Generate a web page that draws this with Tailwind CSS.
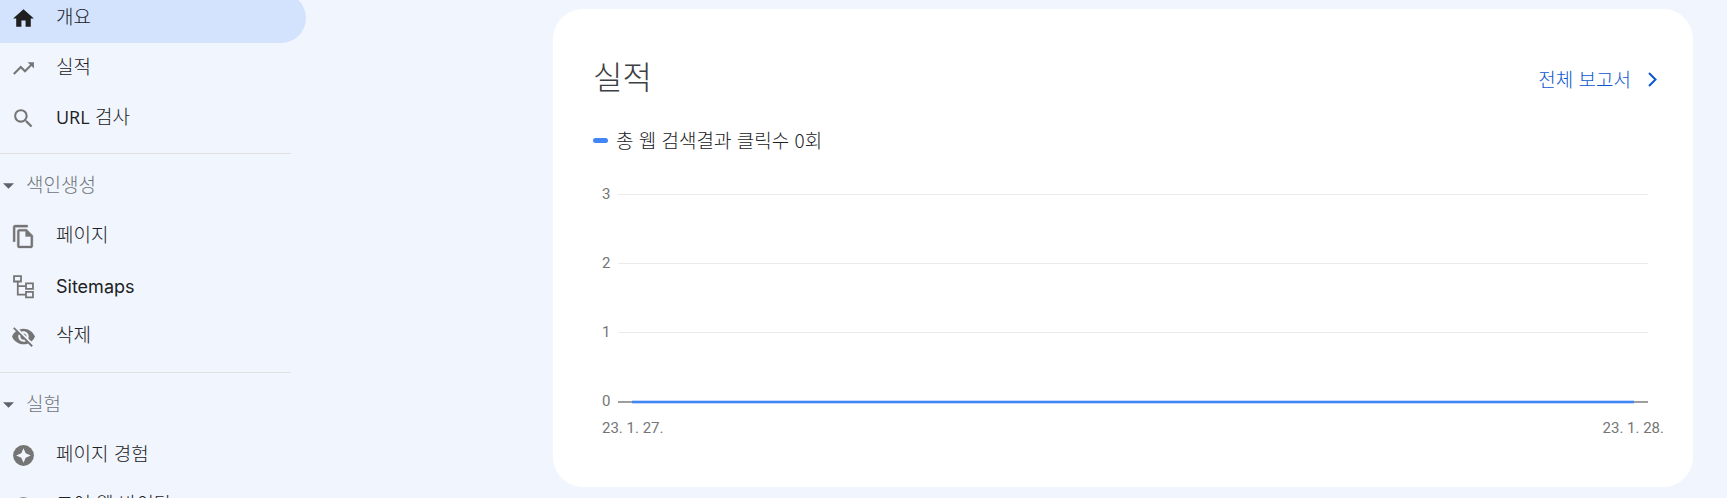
<!DOCTYPE html>
<html lang="ko">
<head>
  <meta charset="UTF-8" />
  <meta name="viewport" content="width=device-width, initial-scale=1.0" />
  <title>개요</title>
  <script src="https://cdn.jsdelivr.net/npm/@tailwindcss/browser@4"></script>
</head>
<body class="bg-[#f1f5fd] text-[#202124] font-['Noto_Sans_CJK_KR',sans-serif]">
  <div class="flex h-screen overflow-hidden">

    <!-- Menú lateral -->
    <nav class="w-[306px] shrink-0 -mt-[7px] text-[19px] font-light">
      <ul class="pb-[10px]">
        <li>
          <a href="#" aria-current="page" class="flex h-[50px] items-center gap-5 rounded-r-full bg-[#d3e3fd] pl-[11px]">
            <svg class="size-[25px]" viewBox="0 0 24 24" fill="#1f1f1f"><path d="M10 20v-6h4v6h5v-8h3L12 3 2 12h3v8z"/></svg>
            <span class="pb-1">개요</span>
          </a>
        </li>
        <li>
          <a href="#" class="flex h-[50px] items-center gap-5 pl-[11px]">
            <svg class="size-[25px]" viewBox="0 0 24 24" fill="#757575"><path d="M16 6l2.29 2.29-4.88 4.88-4-4L2 16.59 3.41 18l6-6 4 4 6.3-6.29L22 12V6z"/></svg>
            <span class="pb-1">실적</span>
          </a>
        </li>
        <li>
          <a href="#" class="flex h-[50px] items-center gap-5 pl-[11px]">
            <svg class="size-[25px]" viewBox="0 0 24 24" fill="#757575"><path d="M15.5 14h-.79l-.28-.27A6.471 6.471 0 0 0 16 9.5 6.5 6.5 0 1 0 9.5 16c1.61 0 3.09-.59 4.23-1.57l.27.28v.79l5 4.99L20.49 19l-4.99-5zm-6 0C7.01 14 5 11.99 5 9.5S7.01 5 9.5 5 14 7.01 14 9.5 11.99 14 9.5 14z"/></svg>
            <span class="pb-1"><span class="font-['Open_Sans'] text-[18px] font-medium">URL</span> 검사</span>
          </a>
        </li>
      </ul>

      <div class="mr-[15px] border-t border-[#e0e0e0] pt-[7px]">
        <button type="button" class="flex h-[50px] w-full items-center gap-3 pl-[3px] text-[#6f7479]">
          <svg class="w-[11px] h-[6px]" viewBox="0 0 10 5" fill="#5f6368"><path d="M0 0h10L5 5z"/></svg>
          <span class="pb-1">색인생성</span>
        </button>
      </div>
      <ul class="pb-[11px]">
        <li>
          <a href="#" class="flex h-[50px] items-center gap-5 pl-[11px]">
            <svg class="size-[25px]" viewBox="0 0 24 24" fill="#757575" stroke="#757575" stroke-width="0.3"><path d="M16 1H4c-1.1 0-2 .9-2 2v14h2V3h12V1zm-1 4H8c-1.1 0-1.99.9-1.99 2L6 21c0 1.1.89 2 1.99 2H19c1.1 0 2-.9 2-2V11l-6-6zM8 21V7h6v5h5v9H8z"/></svg>
            <span class="pb-1">페이지</span>
          </a>
        </li>
        <li>
          <a href="#" class="flex h-[50px] items-center gap-5 pl-[11px]">
            <svg class="size-[25px]" viewBox="0 0 24 24" fill="none" stroke="#757575" stroke-width="1.7"><path d="M2.900 2h6.700v5.200H2.900zM14.400 9h6.700v5.200h-6.700zM14.400 17.200h6.700v5.200h-6.700zM6.500 7.200v12.600h7.900M6.500 11.600h7.900"/></svg>
            <span class="font-['Inter'] text-[18px] font-normal">Sitemaps</span>
          </a>
        </li>
        <li>
          <a href="#" class="flex h-[50px] items-center gap-5 pl-[11px]">
            <svg class="size-[25px]" viewBox="0 0 24 24" fill="#757575"><path d="M12 7c2.76 0 5 2.24 5 5 0 .65-.13 1.26-.36 1.83l2.92 2.92c1.51-1.26 2.7-2.89 3.43-4.75-1.73-4.39-6-7.5-11-7.5-1.4 0-2.74.25-3.98.7l2.16 2.16C10.74 7.13 11.35 7 12 7zM2 4.27l2.28 2.28.46.46A11.804 11.804 0 0 0 1 12c1.73 4.39 6 7.5 11 7.5 1.55 0 3.03-.3 4.38-.84l.42.42L19.73 22 21 20.73 3.27 3 2 4.27zM7.53 9.8l1.55 1.55c-.05.21-.08.43-.08.65 0 1.66 1.34 3 3 3 .22 0 .44-.03.65-.08l1.55 1.55c-.67.33-1.41.53-2.2.53-2.76 0-5-2.24-5-5 0-.79.2-1.53.53-2.2zm4.31-.78l3.15 3.15.02-.16c0-1.66-1.34-3-3-3l-.17.01z"/></svg>
            <span class="pb-1">삭제</span>
          </a>
        </li>
      </ul>

      <div class="mr-[15px] border-t border-[#e0e0e0] pt-[7px]">
        <button type="button" class="flex h-[50px] w-full items-center gap-3 pl-[3px] text-[#6f7479]">
          <svg class="w-[11px] h-[6px]" viewBox="0 0 10 5" fill="#5f6368"><path d="M0 0h10L5 5z"/></svg>
          <span class="pb-1">실험</span>
        </button>
      </div>
      <ul>
        <li>
          <a href="#" class="flex h-[50px] items-center gap-5 pl-[11px]">
            <svg class="size-[25px]" viewBox="0 0 24 24"><circle cx="12" cy="12" r="10" fill="#757575"/><path fill="#f1f5fd" d="M12 5l2.100 4.900L19 12l-4.900 2.100L12 19l-2.100-4.900L5 12l4.900-2.100z"/></svg>
            <span class="pb-1">페이지 경험</span>
          </a>
        </li>
        <li>
          <a href="#" class="flex h-[50px] items-center gap-5 pl-[11px]">
            <svg class="size-[25px]" viewBox="0 0 24 24" fill="#757575"><path d="M20.380 8.570l-1.230 1.850a8 8 0 0 1-.220 7.580H5.070A8 8 0 0 1 15.580 6.850l1.850-1.230A10 10 0 0 0 3.350 19a2 2 0 0 0 1.720 1h13.850a2 2 0 0 0 1.740-1 10 10 0 0 0-.270-10.440zM10.590 15.410a2 2 0 0 0 2.830 0l5.660-8.490-8.490 5.660a2 2 0 0 0 0 2.830z"/></svg>
            <span class="pb-1">코어 웹 바이탈</span>
          </a>
        </li>
      </ul>
    </nav>

    <!-- Contenido -->
    <main class="flex-1 pt-[9px] pl-[247px] pr-[34px]">
      <section class="rounded-[30px] bg-white px-10 pt-[42px] pb-[49px]">
        <div class="flex items-start justify-between">
          <h1 class="text-[32px] leading-[48px] font-light text-[#3c4043]">실적</h1>
          <a href="#" class="flex items-center gap-[17px] pt-[14px] text-[19px] leading-[28px] font-light text-[#0b57d0]">
            전체 보고서
            <svg class="mr-[-4px] h-[15px] w-[9px]" viewBox="0 0 9 15" fill="none" stroke="#0b57d0" stroke-width="2"><path d="M1 1l6.500 6.500L1 14"/></svg>
          </a>
        </div>

        <div class="mt-[27px] flex h-[28px] items-center gap-2 text-[19px] leading-[28px] font-light">
          <span class="h-[5px] w-[15px] rounded-full bg-[#4285f4]"></span>
          <span>총 웹 검색결과 클릭수 0회</span>
        </div>

        <!-- Gráfico de clics -->
        <div class="mt-[6px] pl-[9px] pr-[5px] text-[15px] text-[#757575] font-['Roboto']">
          <div class="flex h-[69px] items-center gap-2"><span class="w-2">3</span><span class="h-px flex-1 bg-[#ebebeb]"></span></div>
          <div class="flex h-[69px] items-center gap-2"><span class="w-2">2</span><span class="h-px flex-1 bg-[#ebebeb]"></span></div>
          <div class="flex h-[69px] items-center gap-2"><span class="w-2">1</span><span class="h-px flex-1 bg-[#ebebeb]"></span></div>
          <div class="flex h-[69px] items-center gap-2">
            <span class="w-2">0</span>
            <span class="flex h-[2px] flex-1 items-center bg-[#9e9e9e] px-[14px]">
              <span class="h-[4px] flex-1 border-y border-[#c6dafc] bg-[#4285f4]"></span>
            </span>
          </div>
          <div class="-mt-[18px] -mr-[16px] flex justify-between leading-[20px]"><span>23. 1. 27.</span><span>23. 1. 28.</span></div>
        </div>
      </section>
    </main>
  </div>
</body>
</html>
